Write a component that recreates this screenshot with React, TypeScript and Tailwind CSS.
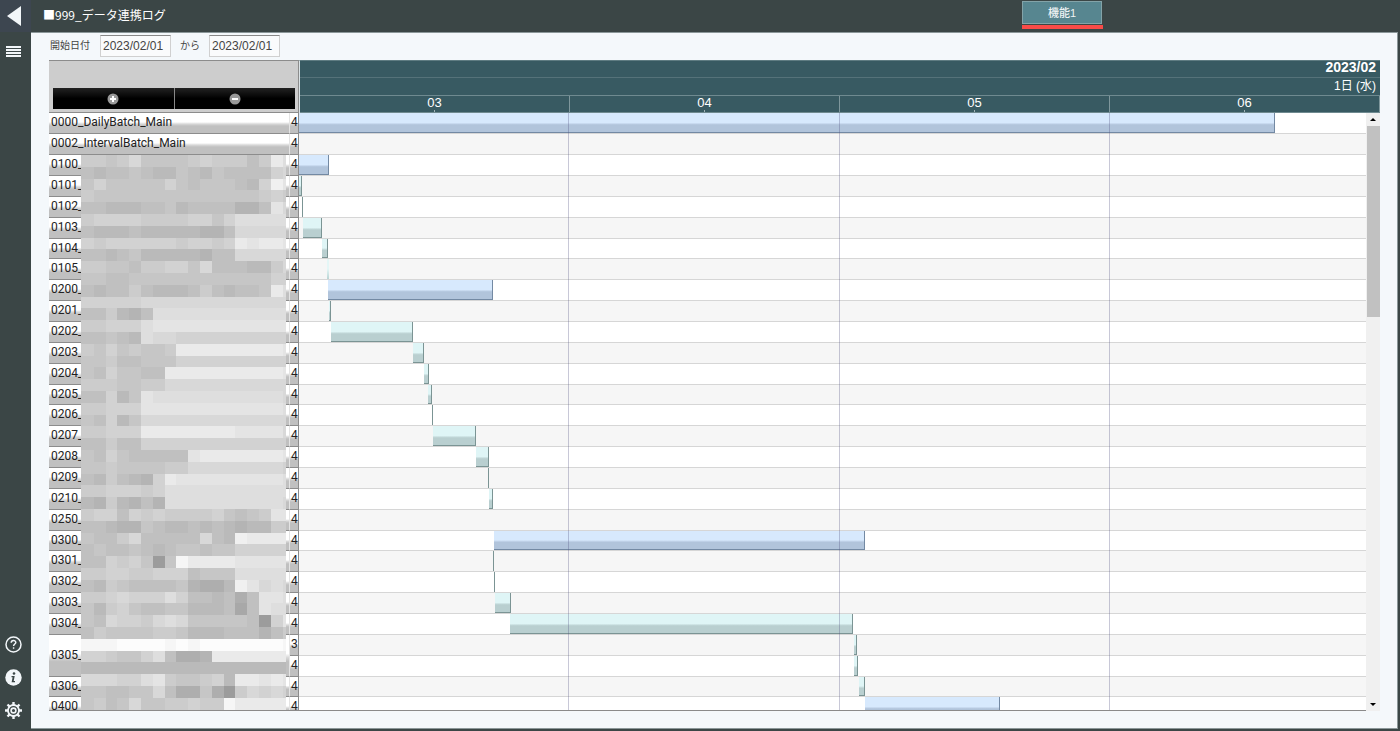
import clsx from "clsx";

interface Bar {
  start: number;
  end: number;
  kind: "group" | "job" | "faint";
}

interface LogRow {
  name?: string;
  count: string;
  rowSpan?: number;
  bar?: Bar;
}

// The visible time window: four hours, 270 ticks each
const WINDOW_TICKS = 1080;
const HOURS = ["03", "04", "05", "06"];

const group = (start: number, end: number): Bar => ({ start, end, kind: "group" });
const job = (start: number, end: number): Bar => ({ start, end, kind: "job" });

const rows: LogRow[] = [
  { name: "0000_DailyBatch_Main", count: "4", bar: group(0, 975) },
  { name: "0002_IntervalBatch_Main", count: "4" },
  { name: "0100_", count: "4", bar: group(0, 30) },
  { name: "0101_", count: "4", bar: job(0, 3) },
  { name: "0102_", count: "4", bar: job(3, 4) },
  { name: "0103_", count: "4", bar: job(4, 23) },
  { name: "0104_", count: "4", bar: job(23, 29) },
  { name: "0105_", count: "4", bar: { start: 28, end: 30, kind: "faint" } },
  { name: "0200_", count: "4", bar: group(29, 194) },
  { name: "0201_", count: "4", bar: job(30, 32) },
  { name: "0202_", count: "4", bar: job(32, 114) },
  { name: "0203_", count: "4", bar: job(114, 125) },
  { name: "0204_", count: "4", bar: job(125, 130) },
  { name: "0205_", count: "4", bar: job(129, 133) },
  { name: "0206_", count: "4", bar: job(133, 134) },
  { name: "0207_", count: "4", bar: job(134, 177) },
  { name: "0208_", count: "4", bar: job(177, 190) },
  { name: "0209_", count: "4", bar: job(189, 190) },
  { name: "0210_", count: "4", bar: job(190, 194) },
  { name: "0250_", count: "4" },
  { name: "0300_", count: "4", bar: group(195, 565) },
  { name: "0301_", count: "4", bar: job(194, 195) },
  { name: "0302_", count: "4", bar: job(195, 196) },
  { name: "0303_", count: "4", bar: job(196, 212) },
  { name: "0304_", count: "4", bar: job(211, 553) },
  { name: "0305_", count: "3", rowSpan: 2, bar: job(554, 557) },
  { count: "4", bar: job(554, 558) },
  { name: "0306_", count: "4", bar: job(559, 565) },
  { name: "0400_", count: "4", bar: group(565, 700) },
];

// Mosaic over the job names, one base-36 digit per cell, darkest is 0
const MOSAIC = [
  "8878a77778988868db",
  "65667655765766669a",
  "7977777976777659ec",
  "877777777777777898",
  "6655566756666446ca",
  "8999988889979bbbbb",
  "6555655555446aaaaa",
  "9899999989989dcddc",
  "6656755555466aaaaa",
  "8877688997a666558a",
  "776677777777777799",
  "6566865556865667db",
  "99999aaaaaaaaaaaaa",
  "668546bbbbbbbbbbbb",
  "88999bcccccccccccc",
  "66765baa9999999999",
  "87978778dddddddddc",
  "778667779999999999",
  "7697766ddddddddddc",
  "8887788aaaaaaaaaaa",
  "66957cbbbbbbbbbbba",
  "88999ccccccccccccb",
  "76957aaaaaaaaaaaaa",
  "88999ddddddddcccca",
  "668669999999999999",
  "769766666cdddddddc",
  "778777788aaaaaaaa9",
  "6586549dcccccccccb",
  "8899989bbbbbbbbbbb",
  "5485464bbbbbbbbbba",
  "8996989888897678cc",
  "665447655656545588",
  "7668a66666a65edddd",
  "676676567767799999",
  "66989707fddddccccc",
  "8899889996777bbbbb",
  "6587666674335ecaba",
  "889a999b9665636ccb",
  "758976677555626cbb",
  "76a998aba77777609c",
  "687777887555666468",
  "fffggggfgfgggggggf",
  "998779b6334ddddddd",
  "555555555555555555",
  "aaa99bc877895ddcdc",
  "776677a6337308a9a9",
  "7867a7788988fddddd",
  "bbbbbbbbbbbbcccccc",
];

const CELL = 11.8;

const rowHeight = (index: number) => (index % 7 === 6 ? "h-5" : "h-[21px]");

const barStyles = {
  group:
    "border-r border-b border-[#7389a3] bg-[linear-gradient(#d7e9fd_50%,#c6d8ee_56%,#b1c4db_62%)]",
  job: "border-r border-b border-[#7b9494] bg-[linear-gradient(#dff5f6_50%,#cce2e3_56%,#b9cfd0_62%)]",
  faint: "bg-[linear-gradient(#e4f6f6_50%,#b9d4d4)]",
};

const cellFill =
  "border-b border-[#8c8c8c] bg-[linear-gradient(#fff_45%,#d8d8d8_55%,#c0c0c0_65%)]";

const Mosaic = () => (
  <svg
    className="absolute left-8 top-[42px] h-[555px] w-[205px]"
    viewBox="0 0 205 555"
    shapeRendering="crispEdges"
    aria-hidden="true"
  >
    {MOSAIC.map((line, y) =>
      line.split("").map((digit, x) => {
        const shade = Math.min(255, 156 + parseInt(digit, 36) * 6);
        return (
          <rect
            key={`${x}-${y}`}
            x={x === 0 ? 0 : x * CELL + 1}
            y={y * CELL}
            width={CELL + 1}
            height={CELL}
            fill={`rgb(${shade},${shade},${shade})`}
          />
        );
      })
    )}
  </svg>
);

const Sidebar = () => (
  <nav className="flex w-[31px] shrink-0 flex-col items-center bg-[#3b4646] text-[#f2f6f9]">
    <button
      type="button"
      aria-label="戻る"
      className="flex h-8 w-full items-center justify-center bg-[#3d4650] pr-1"
    >
      <svg width="14" height="20" viewBox="0 0 14 20" fill="currentColor">
        <path d="M14 0v20L0 10z" />
      </svg>
    </button>
    <button type="button" aria-label="メニュー" className="mt-3 flex h-4 w-full justify-center pr-1">
      <svg width="15" height="14" viewBox="0 0 15 14" fill="currentColor">
        <path d="M0 2h15v2H0zM0 5h15v2H0zM0 8h15v2H0zM0 11h15v2H0z" />
      </svg>
    </button>
    <div className="mt-auto mb-3 flex w-full flex-col items-center gap-4 pr-1">
      <button type="button" aria-label="ヘルプ">
        <svg width="17" height="17" viewBox="0 0 17 17" fill="none" stroke="currentColor">
          <circle cx="8.5" cy="8.5" r="7.5" strokeWidth="1.5" />
          <path d="M6.2 6.8c0-3 4.6-3 4.6-.3 0 1.5-2.2 1.6-2.2 3.4" strokeWidth="1.5" />
          <circle cx="8.6" cy="12" r=".6" fill="currentColor" strokeWidth=".6" />
        </svg>
      </button>
      <button type="button" aria-label="情報">
        <svg width="17" height="17" viewBox="0 0 17 17">
          <circle cx="8.5" cy="8.5" r="8.2" fill="currentColor" />
          <circle cx="9" cy="4.5" r="1.3" fill="#3b4646" />
          <path d="M6.5 7h3.2l-1 5h1.3v1.3H6.6l1-5H6.5z" fill="#3b4646" />
        </svg>
      </button>
      <button type="button" aria-label="設定">
        <svg width="17" height="17" viewBox="0 0 17 17" fill="none" stroke="currentColor">
          <circle cx="8.5" cy="8.5" r="5.5" strokeWidth="1.8" />
          <circle cx="8.5" cy="8.5" r="2.4" strokeWidth="1.6" />
          <path
            d="M8.5 0v3M8.5 14v3M0 8.5h3M14 8.5h3M2.5 2.5l2 2M12.5 12.5l2 2M2.5 14.5l2-2M12.5 4.5l2-2"
            strokeWidth="2.4"
          />
        </svg>
      </button>
    </div>
  </nav>
);

const LogTable = () => (
  <div className="relative h-full w-[250px] shrink-0 overflow-hidden border-r border-[#8c8c8c] bg-white">
    <table className="w-full table-fixed border-separate border-spacing-0 font-['Roboto','Liberation_Sans',sans-serif] text-xs text-[#222]">
      <colgroup>
        <col />
        <col className="w-2" />
      </colgroup>
      <tbody>
        {rows.map((row, i) => (
          <tr key={i} className={rowHeight(i)}>
            {row.name && (
              <th
                scope="row"
                rowSpan={row.rowSpan}
                className={clsx(
                  "overflow-hidden border-r border-r-[#e4e4e4] pt-0 pb-0.5 pl-0.5 text-left font-normal leading-4 whitespace-nowrap",
                  cellFill
                )}
              >
                {row.name}
              </th>
            )}
            <td className={clsx("overflow-hidden pt-0 pr-0 pb-0.5 pl-px leading-4", cellFill)}>
              {row.count}
            </td>
          </tr>
        ))}
      </tbody>
    </table>
    <Mosaic />
  </div>
);

const Timeline = () => (
  <div className="relative h-full min-w-0 flex-1 overflow-hidden">
    {/* as wide as the hour header, which also covers the scrollbar */}
    <div className="w-[calc(100%+14px)]">
      {rows.map((row, i) => (
        <div
          key={i}
          className={clsx(
            "border-b border-[#d6d6d6]",
            rowHeight(i),
            i % 2 === 0 ? "bg-white" : "bg-[#f6f6f6]"
          )}
        >
          {row.bar && (
            <div
              className={clsx("h-full", barStyles[row.bar.kind])}
              style={{
                marginLeft: `${(row.bar.start / WINDOW_TICKS) * 100}%`,
                width: `${((row.bar.end - row.bar.start) / WINDOW_TICKS) * 100}%`,
              }}
            />
          )}
        </div>
      ))}
    </div>
    <div className="absolute inset-y-0 left-0 grid w-[calc(100%+14px)] grid-cols-4">
      {HOURS.map((hour) => (
        <div key={hour} className="border-r border-[#50508050]" />
      ))}
    </div>
  </div>
);

const Scrollbar = () => (
  <div className="flex w-3.5 shrink-0 flex-col items-center bg-[#f0f0f0]">
    <div className="flex h-[13px] items-center">
      <svg width="6" height="3" viewBox="0 0 6 3">
        <path d="M3 0l3 3H0z" />
      </svg>
    </div>
    <div className="w-[13px] flex-1">
      <div className="h-1/3 w-full bg-[#c1c1c1]" />
    </div>
    <div className="flex h-[13px] items-center">
      <svg width="6" height="3" viewBox="0 0 6 3">
        <path d="M3 3l3-3H0z" />
      </svg>
    </div>
  </div>
);

const treeButton =
  "flex flex-1 items-center justify-center bg-[linear-gradient(#222,#000_50%)]";

const GanttHeader = () => (
  <div className="flex h-[53px] shrink-0">
    <div className="flex w-[250px] shrink-0 items-end border-t border-r border-b border-[#8c8c8c] bg-[#cdcdcd] pr-[3px] pb-[3px] pl-1">
      <div className="flex h-[21px] w-full gap-px bg-[#888]">
        <button type="button" aria-label="すべて展開" className={treeButton}>
          <svg width="12" height="12" viewBox="0 0 12 12">
            <circle cx="6" cy="6" r="5.5" fill="#999" />
            <path d="M6 3v6M3 6h6" stroke="#fff" strokeWidth="2" />
          </svg>
        </button>
        <button type="button" aria-label="すべて折りたたむ" className={treeButton}>
          <svg width="12" height="12" viewBox="0 0 12 12">
            <circle cx="6" cy="6" r="5.5" fill="#999" />
            <path d="M3 6h6" stroke="#fff" strokeWidth="2" />
          </svg>
        </button>
      </div>
    </div>
    <div className="flex min-w-0 flex-1 flex-col border-t border-l border-t-[#5f7c82] border-l-[#dbe3e6] bg-[#385a62] text-white">
      <div className="h-[17px] border-b border-[#557279] pr-1 text-right text-sm leading-3 font-bold">
        2023/02
      </div>
      <div className="h-[18px] border-b border-[#6f8a90] pr-1 text-right text-xs leading-4">
        1日 (水)
      </div>
      <div className="grid flex-1 grid-cols-4 border-b border-[#6f8a90]">
        {HOURS.map((hour) => (
          <div
            key={hour}
            className="flex flex-col items-center border-r border-[#7f979c] text-[13px] leading-[14px]"
          >
            {hour}
            <span className="h-0.5 w-px bg-[#9fb1b5]" />
          </div>
        ))}
      </div>
    </div>
  </div>
);

const dateInput =
  "h-[22px] w-[71px] border border-[#d0d0d0] border-t-[#888] bg-[#fafbfc] px-0.5 text-xs text-[#444] outline-none";

export default function App() {
  return (
    <div className="flex h-screen overflow-hidden bg-[#3b4646] font-['Liberation_Sans','Noto_Sans_CJK_JP',sans-serif]">
      <Sidebar />
      <div className="flex min-w-0 flex-1 flex-col">
        <header className="flex h-8 shrink-0 items-start justify-between pl-3 text-white">
          <h1 className="font-['Noto_Sans_CJK_JP',sans-serif] text-xs leading-[30px]">
            ■999_データ連携ログ
          </h1>
          <div className="mr-[297px] w-[81px] pt-px">
            <button
              type="button"
              className="block h-[23px] w-20 border border-[#83a3a8] bg-[#578690] text-[11px] leading-5 font-medium text-[#eef3f4]"
            >
              機能1
            </button>
            <div className="mt-px h-1 bg-[#f94b48]" />
          </div>
        </header>

        <main className="mr-0.5 mb-0.5 flex min-h-0 flex-1 flex-col border-t border-r border-b border-[#8b9799] bg-[#f4f8fb] pr-[17px] pb-[17px] pl-[18px]">
          <form className="flex h-[27px] shrink-0 items-start pt-0.5 pl-px text-[10px] leading-[22px] text-[#444]">
            <label htmlFor="date-from" className="mr-2.5 w-10">
              開始日付
            </label>
            <input id="date-from" type="text" defaultValue="2023/02/01" className={dateInput} />
            <label htmlFor="date-to" className="mx-[9px] w-5 whitespace-nowrap">
              から
            </label>
            <input id="date-to" type="text" defaultValue="2023/02/01" className={dateInput} />
          </form>

          <section className="flex min-h-0 flex-1 flex-col">
            <GanttHeader />
            <div className="flex min-h-0 flex-1">
              <div className="flex min-w-0 flex-1 border-b border-[#8a8a8a]">
                <LogTable />
                <Timeline />
              </div>
              <Scrollbar />
            </div>
          </section>
        </main>
      </div>
    </div>
  );
}
